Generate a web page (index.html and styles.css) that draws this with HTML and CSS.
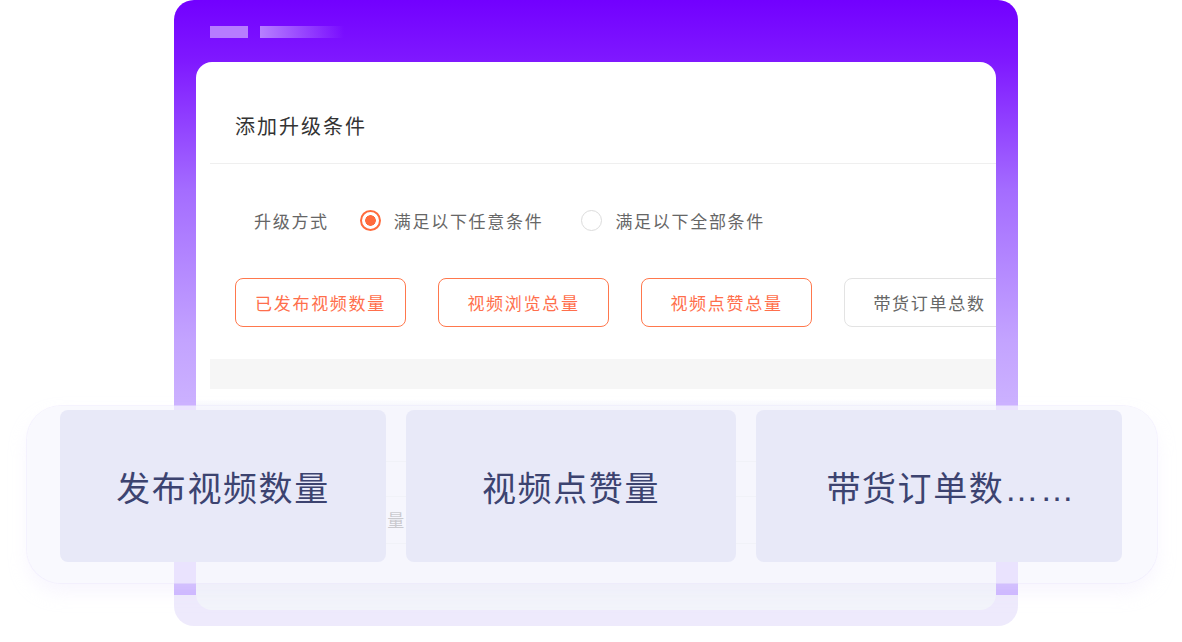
FILE: index.html
```html
<!DOCTYPE html>
<html lang="zh-CN">
<head>
    <meta charset="UTF-8">
    <meta name="viewport" content="width=device-width, initial-scale=1.0">
    <title>添加升级条件</title>
    <link rel="stylesheet" href="styles.css">
</head>
<body>
    <div class="stage">
        <div class="window">
            <div class="window-bar">
                <span class="bar bar-a"></span>
                <span class="bar bar-b"></span>
            </div>

            <div class="panel">
                <div class="panel-title">添加升级条件</div>
                <div class="divider"></div>

                <div class="mode-row">
                    <span class="mode-label">升级方式</span>
                    <label class="radio-option">
                        <span class="radio checked"></span>
                        <span>满足以下任意条件</span>
                    </label>
                    <label class="radio-option">
                        <span class="radio"></span>
                        <span>满足以下全部条件</span>
                    </label>
                </div>

                <div class="tags">
                    <div class="tag">已发布视频数量</div>
                    <div class="tag">视频浏览总量</div>
                    <div class="tag">视频点赞总量</div>
                    <div class="tag tag-plain">带货订单总数</div>
                </div>

                <div class="gray-band"></div>

                <div class="table">
                    <div class="table-row row-blank"></div>
                    <div class="table-row row-head"></div>
                    <div class="table-row row-item">已发布视频数量</div>
                </div>
            </div>
        </div>

        <!-- 前景卡片 -->
        <div class="highlights">
            <div class="highlight card-1">发布视频数量</div>
            <div class="highlight card-2">视频点赞量</div>
            <div class="highlight card-3">带货订单数……</div>
        </div>
    </div>
</body>
</html>
```

FILE: styles.css
```css
body {
    margin: 0;
    background: #fff;
    font-family: "Noto Sans CJK SC", "Noto Sans", sans-serif;
}

.stage {
    position: relative;
    width: 1182px;
    height: 642px;
    overflow: hidden;
}

.window {
    margin-left: 174px;
    width: 844px;
    height: 626px;
    box-sizing: border-box;
    padding-top: 26px;
    border-radius: 20px;
    background: linear-gradient(to bottom,
        #7200ff 0,
        #7f18ff 60px,
        #a46cff 190px,
        #c3a3ff 340px,
        #cbb0ff 400px,
        #c9b0ff 595px,
        #eeeafc 595px);
}

.window-bar {
    display: flex;
    gap: 12px;
    padding-left: 36px;
    height: 12px;
}

.bar {
    display: block;
    height: 12px;
}

.bar-a {
    width: 38px;
    background: #b77cff;
}

.bar-b {
    width: 84px;
    background: linear-gradient(90deg, rgba(190, 140, 255, 0.9), rgba(140, 70, 255, 0));
}

.panel {
    margin: 24px 0 0 22px;
    width: 800px;
    height: 548px;
    border-radius: 16px;
    overflow: hidden;
    background: linear-gradient(to bottom, #fff 0, #fff 337px, #f2f4fa 347px);
    color: #333;
}

.panel-title {
    padding: 52px 0 25px 39px;
    font-size: 20px;
    line-height: 24px;
    letter-spacing: 2px;
    color: #333;
}

.divider {
    margin-left: 14px;
    height: 1px;
    background: #efefef;
}

.mode-row {
    display: flex;
    align-items: center;
    margin-top: 45px;
    padding-left: 58px;
    height: 22px;
    font-size: 17px;
    letter-spacing: 1.7px;
    color: #666;
}

.mode-label {
    margin-right: 31px;
}

.radio-option {
    display: flex;
    align-items: center;
    gap: 13px;
    margin-right: 38px;
}

.radio {
    width: 21px;
    height: 21px;
    box-sizing: border-box;
    border-radius: 50%;
    border: 1px solid #dcdcdc;
    background: #fff;
}

.radio.checked {
    border: 2px solid #ff6b3d;
    background: radial-gradient(circle, #ff6b3d 0, #ff6b3d 5px, #fff 5.6px);
}

.tags {
    display: flex;
    gap: 32px;
    margin-top: 47px;
    padding-left: 39px;
}

.tag {
    flex-shrink: 0;
    width: 171px;
    height: 49px;
    box-sizing: border-box;
    border: 1.6px solid #ff784d;
    border-radius: 8px;
    display: flex;
    align-items: center;
    justify-content: center;
    font-size: 17px;
    letter-spacing: 1.7px;
    color: #ff6f4c;
}

.tag-plain {
    border: 1px solid #e3e3e3;
    color: #666;
}

.gray-band {
    margin: 32px 0 0 14px;
    height: 30px;
    background: #f6f6f6;
}

.table {
    margin-left: 14px;
}

.table-row {
    border-bottom: 1px solid #e2e4ea;
}

.row-blank {
    height: 72px;
}

.row-head {
    height: 34px;
}

.row-item {
    height: 46px;
    line-height: 46px;
    padding-left: 65px;
    font-size: 17px;
    letter-spacing: 1.7px;
    color: #555;
}

/* 前景卡片 */
.highlights {
    position: absolute;
    z-index: 1;
    left: 60px;
    top: 410px;
    width: 1062px;
    height: 152px;
    display: flex;
    gap: 20px;
}

/* 卡片后面的磨砂底 */
.highlights::before {
    content: "";
    position: absolute;
    z-index: -1;
    top: -4px;
    left: -33px;
    right: -35px;
    bottom: -21px;
    border-radius: 34px;
    background: rgba(246, 246, 253, 0.72);
    box-shadow:
        0 0 0 1px rgba(236, 230, 253, 0.45),
        0 10px 18px rgba(236, 230, 253, 0.35);
}

.highlight {
    height: 152px;
    border-radius: 8px;
    background: #e8e9f8;
    display: flex;
    align-items: center;
    justify-content: center;
    font-family: "Liberation Sans", "Noto Sans CJK SC", sans-serif;
    font-size: 34px;
    letter-spacing: 1.6px;
    color: #3c4370;
}

.card-1 {
    width: 326px;
}

.card-2 {
    width: 330px;
}

.card-3 {
    width: 366px;
    padding-left: 24px;
    box-sizing: border-box;
}
```
